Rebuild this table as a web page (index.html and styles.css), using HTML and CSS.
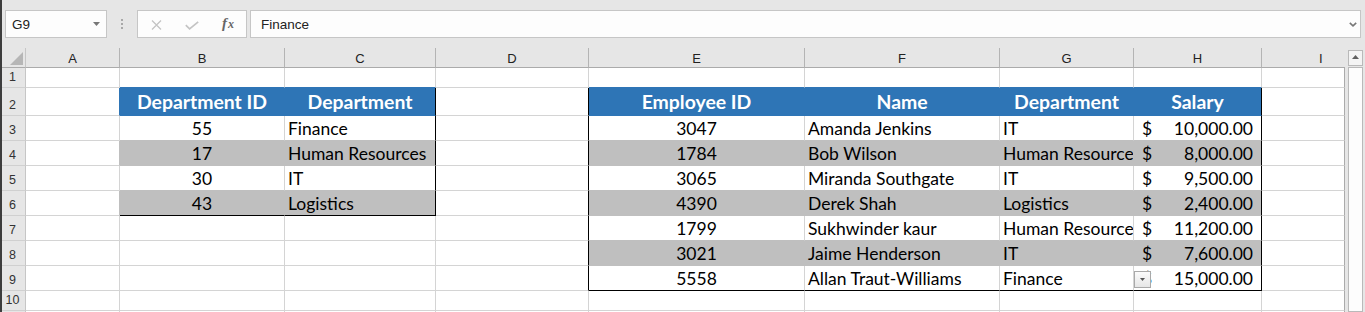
FILE: index.html
```html
<!DOCTYPE html>
<html lang="en">
<head>
<meta charset="utf-8">
<title>Sheet</title>
<link rel="stylesheet" href="styles.css">
</head>
<body>
<div class="app">
  <div class="toolbar">
    <div class="namebox">
      <span class="nb-text">G9</span>
      <svg class="nb-arrow" width="7" height="4" viewBox="0 0 7 4"><path d="M0 0H7L3.5 4Z" fill="#777"/></svg>
    </div>
    <div class="grip"><i></i><i></i><i></i></div>
    <div class="fbtns">
      <span class="fb fb-x"><svg width="11" height="10" viewBox="0 0 11 10"><path d="M1 0.5L10 9.5M10 0.5L1 9.5" stroke="#c4c4c4" stroke-width="1.3" fill="none"/></svg></span>
      <span class="fb fb-ok"><svg width="14" height="9" viewBox="0 0 14 9"><path d="M0.8 4.2L4.6 7.8L13.2 0.8" stroke="#c4c4c4" stroke-width="1.7" fill="none"/></svg></span>
      <span class="fb fx"><i class="fx-f">f</i><i class="fx-x">x</i></span>
    </div>
    <div class="fbar">
      <span class="fbar-text">Finance</span>
      <svg class="fbar-chev" width="8" height="5" viewBox="0 0 8 5"><path d="M0.8 0.8L4 3.8L7.2 0.8" stroke="#777" stroke-width="1.6" fill="none"/></svg>
    </div>
  </div>

  <div class="sheetwrap">
    <div class="sheet">
      <!-- column headers -->
      <div class="corner"><svg width="13" height="13" viewBox="0 0 13 13"><path d="M13 0V13H0Z" fill="#b6b6b6"/></svg></div>
      <div class="ch">A</div><div class="ch">B</div><div class="ch">C</div><div class="ch">D</div>
      <div class="ch">E</div><div class="ch">F</div><div class="ch">G</div><div class="ch">H</div>
      <div class="ch ch-last">I</div>

      <!-- row 1 -->
      <div class="rh">1</div>
      <div class="c"></div><div class="c blB"></div><div class="c blB"></div><div class="c"></div>
      <div class="c blB"></div><div class="c blB"></div><div class="c blB"></div><div class="c blB"></div><div class="c last"></div>

      <!-- row 2 -->
      <div class="rh">2</div>
      <div class="c blR"></div>
      <div class="c hd">Department ID</div>
      <div class="c hd bR">Department</div>
      <div class="c bR"></div>
      <div class="c hd">Employee ID</div>
      <div class="c hd">Name</div>
      <div class="c hd">Department</div>
      <div class="c hd bR">Salary</div>
      <div class="c last"></div>

      <!-- row 3 -->
      <div class="rh">3</div>
      <div class="c"></div>
      <div class="c ctr gB">55</div>
      <div class="c gB bR">Finance</div>
      <div class="c bR"></div>
      <div class="c ctr gB">3047</div>
      <div class="c gB">Amanda Jenkins</div>
      <div class="c gB">IT</div>
      <div class="c m gB bR"><span>$</span><span>10,000.00</span></div>
      <div class="c last"></div>

      <!-- row 4 -->
      <div class="rh">4</div>
      <div class="c gR"></div>
      <div class="c g ctr">17</div>
      <div class="c g bR">Human Resources</div>
      <div class="c bR"></div>
      <div class="c g ctr">1784</div>
      <div class="c g">Bob Wilson</div>
      <div class="c g">Human Resources</div>
      <div class="c g m bR"><span>$</span><span>8,000.00</span></div>
      <div class="c last"></div>

      <!-- row 5 -->
      <div class="rh">5</div>
      <div class="c"></div>
      <div class="c ctr gB">30</div>
      <div class="c gB bR">IT</div>
      <div class="c bR"></div>
      <div class="c ctr gB">3065</div>
      <div class="c gB">Miranda Southgate</div>
      <div class="c gB">IT</div>
      <div class="c m gB bR"><span>$</span><span>9,500.00</span></div>
      <div class="c last"></div>

      <!-- row 6 -->
      <div class="rh">6</div>
      <div class="c gR"></div>
      <div class="c g ctr bB">43</div>
      <div class="c g bR bB">Logistics</div>
      <div class="c bR"></div>
      <div class="c g ctr">4390</div>
      <div class="c g">Derek Shah</div>
      <div class="c g">Logistics</div>
      <div class="c g m bR"><span>$</span><span>2,400.00</span></div>
      <div class="c last"></div>

      <!-- row 7 -->
      <div class="rh">7</div>
      <div class="c"></div><div class="c"></div><div class="c"></div>
      <div class="c bR"></div>
      <div class="c ctr gB">1799</div>
      <div class="c gB">Sukhwinder kaur</div>
      <div class="c gB">Human Resources</div>
      <div class="c m gB bR"><span>$</span><span>11,200.00</span></div>
      <div class="c last"></div>

      <!-- row 8 -->
      <div class="rh">8</div>
      <div class="c"></div><div class="c"></div><div class="c"></div>
      <div class="c bR"></div>
      <div class="c g ctr">3021</div>
      <div class="c g">Jaime Henderson</div>
      <div class="c g">IT</div>
      <div class="c g m bR"><span>$</span><span>7,600.00</span></div>
      <div class="c last"></div>

      <!-- row 9 -->
      <div class="rh">9</div>
      <div class="c"></div><div class="c"></div><div class="c"></div>
      <div class="c bR"></div>
      <div class="c ctr bB">5558</div>
      <div class="c bB">Allan Traut-Williams</div>
      <div class="c bB">Finance</div>
      <div class="c m bB bR has-dd"><span>$</span><span>15,000.00</span>
        <span class="dd"><svg width="5" height="3" viewBox="0 0 5 3"><path d="M0 0H5L2.5 3Z" fill="#555"/></svg></span>
      </div>
      <div class="c last"></div>

      <!-- row 10 -->
      <div class="rh">10</div>
      <div class="c"></div><div class="c"></div><div class="c"></div><div class="c"></div>
      <div class="c"></div><div class="c"></div><div class="c"></div><div class="c"></div><div class="c last"></div>

      <!-- row 11 (only its top edge is visible) -->
      <div class="rh"></div>
      <div class="c"></div><div class="c"></div><div class="c"></div><div class="c"></div>
      <div class="c"></div><div class="c"></div><div class="c"></div><div class="c"></div><div class="c last"></div>
    </div>

    <div class="vscroll">
      <div class="vs-up"><svg width="7" height="4" viewBox="0 0 7 4"><path d="M0 4H7L3.5 0Z" fill="#606060"/></svg></div>
      <div class="vs-thumb"></div>
    </div>
  </div>
</div>
</body>
</html>
```

FILE: styles.css
```css
* {
  box-sizing: border-box;
  margin: 0;
  padding: 0;
}

html,
body {
  height: 312px;
  overflow: hidden;
  background: #e6e6e6;
}

body {
  font-family: "Liberation Sans", Arial, sans-serif;
  color: #222;
}

.app {
  border-left: 2px solid #3d3d3d;
  height: 312px;
}

/* ---------- formula bar ---------- */
.toolbar {
  height: 48px;
  display: flex;
  align-items: flex-start;
  padding-top: 10px;
}

.namebox {
  margin-left: 3px;
  width: 102px;
  height: 28px;
  border: 1px solid #c6c6c6;
  background: #fdfdfd;
  display: flex;
  align-items: center;
  justify-content: space-between;
  padding: 0 6px 0 6px;
  font-size: 13.5px;
  color: #222;
}

.nb-text {
  padding-top: 1px;
}

.grip {
  width: 30px;
  display: flex;
  flex-direction: column;
  align-items: center;
  gap: 2px;
  padding-top: 9px;
}

.grip i {
  display: block;
  width: 2px;
  height: 2px;
  background: #a8a8a8;
}

.fbtns {
  width: 110px;
  height: 28px;
  border: 1px solid #c6c6c6;
  background: #fdfdfd;
  display: flex;
  align-items: center;
}

.fb {
  width: 36px;
  height: 100%;
  display: flex;
  align-items: center;
  justify-content: center;
}

.fb-x svg {
  margin-top: 1px;
}

.fb-ok svg {
  margin-top: 2px;
}

.fx {
  font-family: "Liberation Serif", "Times New Roman", serif;
  color: #666;
  align-items: baseline;
  padding-top: 4px;
}

.fx i {
  font-style: italic;
  font-weight: bold;
}

.fx-f {
  font-size: 15px;
}

.fx-x {
  font-size: 12px;
  margin-left: 1px;
}

.fbar {
  margin-left: 3px;
  width: 1111px;
  height: 28px;
  border: 1px solid #c6c6c6;
  background: #fdfdfd;
  display: flex;
  align-items: center;
  justify-content: space-between;
  padding: 0 3px 0 10px;
  font-size: 13.5px;
  color: #222;
}

.fbar-text {
  padding-top: 1px;
}

.fbar-chev {
  margin-top: 1px;
}

/* ---------- sheet ---------- */
.sheetwrap {
  display: flex;
  align-items: flex-start;
}

.sheet {
  display: grid;
  grid-template-columns: 24px 94px 165px 151px 153px 216px 195px 134px 128px 83px;
  grid-template-rows: 20px 20px 28px repeat(7, 25px) 20px 25px;
  width: 1343px;
  overflow: hidden;
}

.corner {
  background: #e6e6e6;
  border-right: 1px solid #c6c6c6;
  border-bottom: 1px solid #ababab;
  display: flex;
  justify-content: flex-end;
  align-items: flex-end;
  padding: 0 2px 2px 0;
}

.ch {
  background: #e6e6e6;
  border-right: 1px solid #b4b4b4;
  border-bottom: 1px solid #ababab;
  font-size: 13px;
  line-height: 17px;
  color: #222;
  display: flex;
  justify-content: center;
  align-items: flex-end;
}

.ch-last {
  border-right: none;
  justify-content: flex-start;
  padding-left: 57px;
}

.rh {
  background: #e6e6e6;
  border-right: 1px solid #c6c6c6;
  border-bottom: 1px solid #d0d0d0;
  font-size: 12.5px;
  line-height: 15px;
  color: #333;
  display: flex;
  justify-content: center;
  align-items: flex-end;
  padding: 0 2px 2px 0;
}

.c {
  background: #fff;
  border-right: 1px solid #d4d4d4;
  border-bottom: 1px solid #d4d4d4;
  font-family: Lato, "Liberation Sans", sans-serif;
  font-size: 17.5px;
  line-height: 20px;
  color: #000;
  display: flex;
  align-items: flex-end;
  padding: 0 3px 1px;
  white-space: nowrap;
  overflow: hidden;
  min-width: 0;
}

.last {
  border-right-color: #ababab;
}

.ctr {
  justify-content: center;
}

.hd {
  background: #2e75b6;
  border-right-color: #2e75b6;
  border-bottom-color: #2e75b6;
  color: #fff;
  font-weight: bold;
  font-size: 19.4px;
  line-height: 22px;
  justify-content: center;
  padding-bottom: 2px;
}

.g {
  background: #bfbfbf;
  border-right-color: #bfbfbf;
  border-bottom-color: #bfbfbf;
}

.m {
  justify-content: space-between;
  padding-left: 8px;
  padding-right: 8px;
}

.gB {
  border-bottom-color: #bfbfbf;
}

.gR {
  border-right-color: #bfbfbf;
}

.blB {
  border-bottom-color: #2e75b6;
}

.blR {
  border-right-color: #2e75b6;
}

.bR {
  border-right-color: #000;
}

.bB {
  border-bottom-color: #000;
}

.has-dd {
  position: relative;
}

.dd {
  position: absolute;
  left: 0;
  top: 5px;
  width: 17px;
  height: 17px;
  border: 1px solid #a9a9a9;
  background: linear-gradient(#fbfbfb, #e6e6e6);
  display: flex;
  align-items: center;
  justify-content: center;
}

/* ---------- scrollbar ---------- */
.vscroll {
  margin-left: 3px;
  margin-top: 2px;
  width: 15px;
  height: 262px;
  display: flex;
  flex-direction: column;
}

.vs-up {
  height: 16px;
  border: 1px solid #b9b9b9;
  background: #f4f4f4;
  display: flex;
  justify-content: center;
  padding-top: 4px;
}

.vs-thumb {
  flex: 1;
  margin-top: 1px;
  border: 1px solid #b9b9b9;
  background: #fdfdfd;
}
```
